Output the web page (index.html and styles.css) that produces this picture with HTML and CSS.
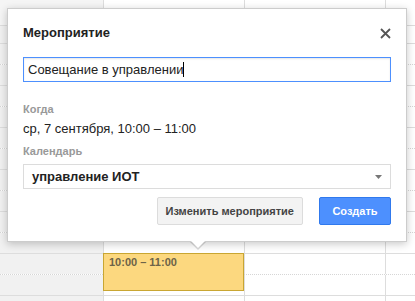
FILE: index.html
```html
<!DOCTYPE html>
<html lang="ru">
<head>
    <meta charset="UTF-8">
    <meta name="viewport" content="width=device-width, initial-scale=1.0">
    <title>Календарь</title>
    <link rel="stylesheet" href="styles.css">
</head>
<body>
    <div class="calendar" id="calendar"></div>

    <div class="event">10:00 – 11:00</div>

    <div class="bubble">
        <div class="bubble-head">
            <div class="bubble-title">Мероприятие</div>
            <svg class="close" width="11" height="11" viewBox="0 0 11 11">
                <path d="M1 1L10 10M10 1L1 10" stroke="#555" stroke-width="1.8" fill="none"/>
            </svg>
        </div>
        <div class="title-input focused">Совещание в управлении<span class="caret"></span></div>
        <div class="label first">Когда</div>
        <div class="when">ср, 7 сентября, 10:00 – 11:00</div>
        <div class="label">Календарь</div>
        <div class="picker">
            <span>управление ИОТ</span>
            <svg width="7" height="4" viewBox="0 0 7 4"><path d="M0 0H7L3.5 4Z" fill="#777"/></svg>
        </div>
        <div class="actions">
            <button class="btn">Изменить мероприятие</button>
            <button class="btn primary">Создать</button>
        </div>
        <div class="arrow"></div>
    </div>

    <script>
        const calendar = document.getElementById('calendar');
        // header strip, then a short row, then half-hour rows
        const rows = ['head', 'top'];
        for (let i = 1; i <= 13; i++) {
            rows.push(i % 2 ? 'half dotted' : 'half');
        }
        rows.forEach(type => {
            const row = document.createElement('div');
            row.className = 'row ' + type;
            row.innerHTML = '<div class="cell gutter"></div><div class="cell day"></div><div class="cell day"></div><div class="cell day last"></div>';
            calendar.appendChild(row);
        });
    </script>
</body>
</html>
```

FILE: styles.css
```css
body {
    margin: 0;
    font-family: "Liberation Sans", Arial, sans-serif;
    color: #222;
    background-color: #fff;
    overflow: hidden;
}
.calendar {
    display: flex;
    flex-direction: column;
    height: 301px;
    overflow: hidden;
}
.row {
    display: flex;
    flex-shrink: 0;
    box-sizing: border-box;
    border-bottom: 1px solid #dddddd;
}
.row.head {
    height: 26px;
}
.row.top {
    height: 18px;
}
.row.half {
    height: 21px;
}
.row.dotted {
    border-bottom: 1px dotted #d6d6d6;
}
.cell {
    box-sizing: border-box;
    border-right: 1px solid #dddddd;
}
.gutter {
    width: 104px;
    background-color: #f1f1f1;
}
.row.head .gutter {
    background-color: #f5f5f5;
}
.day {
    width: 141px;
}
.day.last {
    flex: 1;
    border-right: none;
}
.event {
    position: absolute;
    left: 103px;
    top: 253px;
    width: 141px;
    height: 38px;
    box-sizing: border-box;
    padding: 2px 5px 0;
    background-color: #fcd87f;
    border: 1px solid #c9a632;
    color: #6d6348;
    font-size: 11px;
    font-weight: bold;
    line-height: 12px;
}
.bubble {
    position: absolute;
    left: 7px;
    top: 8px;
    width: 400px;
    height: 234px;
    box-sizing: border-box;
    padding: 16px 15px;
    background-color: #fff;
    border: 1px solid rgba(0,0,0,0.2);
    box-shadow: 0 2px 8px rgba(0,0,0,0.22);
}
.bubble-head {
    display: flex;
    justify-content: space-between;
    align-items: center;
    height: 16px;
}
.bubble-title {
    font-size: 13px;
    font-weight: bold;
    line-height: 16px;
    color: #222;
}
.close {
    display: block;
}
.title-input {
    display: flex;
    align-items: center;
    height: 25px;
    box-sizing: border-box;
    margin-top: 16px;
    padding: 0 4px;
    border: 1px solid #d9d9d9;
    font-size: 13px;
    color: #222;
}
.title-input.focused {
    border-color: #4d90fe;
    box-shadow: inset 0 1px 2px rgba(0,0,0,0.1);
}
.caret {
    display: inline-block;
    width: 1px;
    height: 15px;
    background-color: #000;
}
.label {
    margin-top: 7px;
    font-size: 11px;
    font-weight: bold;
    line-height: 14px;
    color: #999;
}
.label.first {
    margin-top: 20px;
}
.when {
    margin-top: 5px;
    font-size: 13px;
    line-height: 16px;
}
.picker {
    display: flex;
    justify-content: space-between;
    align-items: center;
    height: 25px;
    box-sizing: border-box;
    margin-top: 6px;
    padding: 0 8px;
    border: 1px solid #dcdcdc;
    font-size: 13px;
    font-weight: bold;
}
.actions {
    display: flex;
    justify-content: flex-end;
    gap: 16px;
    margin-top: 8px;
}
.btn {
    height: 28px;
    min-width: 72px;
    box-sizing: border-box;
    padding: 0 8px;
    background-color: #f3f3f3;
    border: 1px solid #dcdcdc;
    border-radius: 2px;
    color: #444;
    font-family: "Liberation Sans", Arial, sans-serif;
    font-size: 11px;
    font-weight: bold;
}
.btn.primary {
    background-color: #4d90fe;
    border-color: #3079ed;
    color: #fff;
}
.arrow {
    position: absolute;
    left: 182px;
    bottom: -9px;
    width: 0;
    height: 0;
    border-left: 8px solid transparent;
    border-right: 8px solid transparent;
    border-top: 8px solid rgba(0,0,0,0.15);
}
.arrow::after {
    content: "";
    position: absolute;
    left: -7px;
    top: -9px;
    border-left: 7px solid transparent;
    border-right: 7px solid transparent;
    border-top: 7px solid #fff;
}
```
